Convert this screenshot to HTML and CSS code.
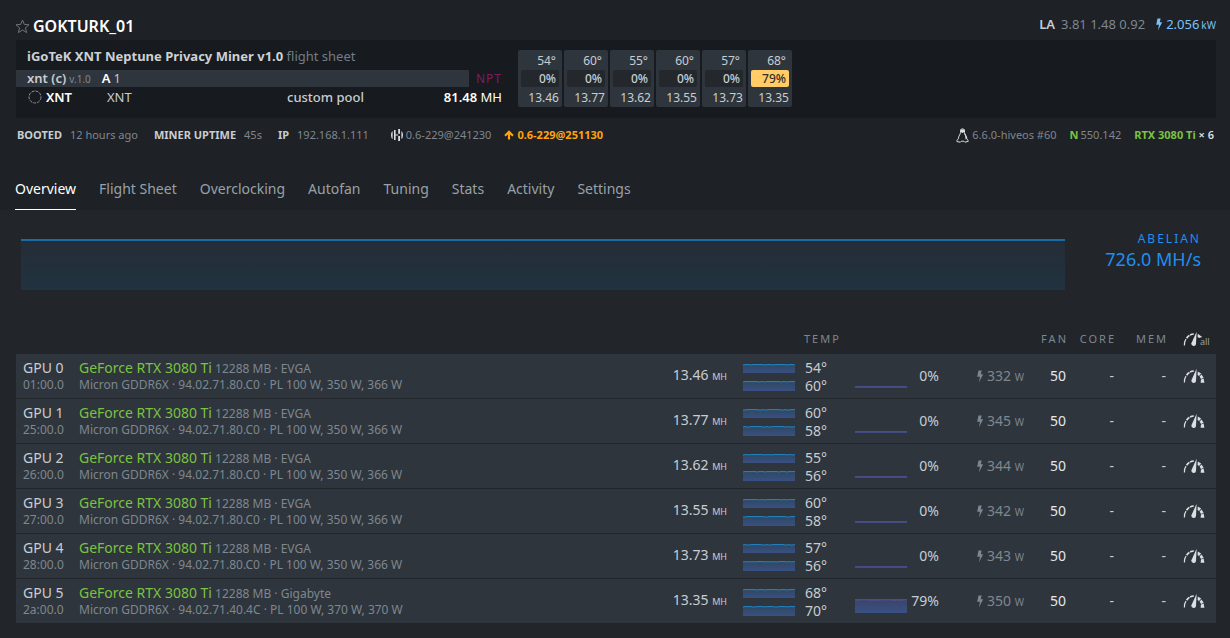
FILE: index.html
```html
<!DOCTYPE html>
<html lang="en">
<head>
    <meta charset="UTF-8">
    <meta name="viewport" content="width=device-width, initial-scale=1.0">
    <title>GOKTURK_01</title>
    <link rel="stylesheet" href="styles.css">
</head>
<body>
    <!-- Shared icons -->
    <svg class="sprite" aria-hidden="true">
        <symbol id="icon-bolt" viewBox="0 0 8 14">
            <path d="M2.4 0.5 H5.8 L4.8 4.6 H7.4 L2.8 13.4 L4 7.2 H1 Z"/>
        </symbol>
        <symbol id="icon-gauge" viewBox="0 0 22 16">
            <path d="M1.4 14.5 A9.2 9.2 0 0 1 3 8.2" fill="none" stroke="currentColor" stroke-width="1.2"/>
            <path d="M3.6 7.2 A9.2 9.2 0 0 1 10.8 3" fill="none" stroke="currentColor" stroke-width="1.7" stroke-dasharray="4 0.7"/>
            <path d="M13.6 0.8 L13 13 A2.2 2.2 0 0 1 8.4 12.2 Z"/>
            <path d="M14.8 3.4 L18.2 5.6 L16 8 L14.6 7 Z"/>
            <path d="M18.6 6.4 L20.6 9.8 L18 11 L16.6 8.4 Z"/>
            <path d="M20.6 10.6 L21.4 14.8 H17.6 L18 11.6 Z"/>
        </symbol>
        <symbol id="icon-gauge-all" viewBox="0 0 22 16">
            <path d="M1.4 14.5 A9.2 9.2 0 0 1 3 8.2" fill="none" stroke="currentColor" stroke-width="1.2"/>
            <path d="M3.6 7.2 A9.2 9.2 0 0 1 10.8 3" fill="none" stroke="currentColor" stroke-width="1.7" stroke-dasharray="4 0.7"/>
            <path d="M13.6 0.8 L13 13 A2.2 2.2 0 0 1 8.4 12.2 Z"/>
            <path d="M14.8 2.8 L19.2 6 L16 7 L14.6 5.8 Z"/>
        </symbol>
        <linearGradient id="fill-temp" x1="0" y1="0" x2="0" y2="1">
            <stop offset="0" stop-color="#2d4860"/>
            <stop offset="1" stop-color="#3a5083"/>
        </linearGradient>
        <linearGradient id="fill-fan" x1="0" y1="0" x2="0" y2="1">
            <stop offset="0" stop-color="#3b4468"/>
            <stop offset="1" stop-color="#395184"/>
        </linearGradient>
    </svg>

    <header class="worker-header">
        <div class="title-row">
            <button class="star" type="button" aria-label="Favorite">
                <svg width="15" height="15" viewBox="0 0 15 15"><path d="M7.5 1 L9.3 5.4 L14 5.8 L10.4 8.8 L11.6 13.6 L7.5 11 L3.4 13.6 L4.6 8.8 L1 5.8 L5.7 5.4 Z"/></svg>
            </button>
            <h1>GOKTURK_01</h1>
            <div class="load">
                <b>LA</b>
                <span class="averages">3.81 1.48 0.92</span>
                <span class="power"><svg class="bolt"><use href="#icon-bolt"/></svg>2.056<small>kW</small></span>
            </div>
        </div>

        <section class="flight-panel">
            <div class="flight-info">
                <div class="flight-name"><b>iGoTeK XNT Neptune Privacy Miner v1.0</b> flight sheet</div>
                <div class="miner-row">
                    <div class="miner-bar"><b>xnt (c)</b> <small>v.1.0</small><span class="accepted"><b>A</b> 1</span></div>
                    <span class="algo">NPT</span>
                </div>
                <div class="coin-row">
                    <svg class="coin" width="14" height="14" viewBox="0 0 14 14"><circle cx="7" cy="7" r="6"/></svg>
                    <b class="coin-name">XNT</b>
                    <span class="wallet">XNT</span>
                    <span class="pool">custom pool</span>
                    <span class="rate"><b>81.48</b> MH</span>
                </div>
            </div>
            <div class="gpu-boxes" id="gpu-boxes"></div>
        </section>

        <div class="status-row">
            <span><b>BOOTED</b>12 hours ago</span>
            <span><b>MINER UPTIME</b>45s</span>
            <span><b>IP</b>192.168.1.111</span>
            <span class="version">
                <svg width="12" height="12" viewBox="0 0 12 12"><path d="M1.6 2 V10 Q0 9 0 6 Q0 3 1.6 2 Z M3 1 H4.6 V11 H3 Z M4.6 5.4 H7.2 V6.6 H4.6 Z M7.2 0 H9 V4.8 H7.2 Z M7.2 7 H9 V12 H7.2 Z M10.4 2 Q12 3 12 6 Q12 9 10.4 10 Z"/></svg>0.6-229@241230
            </span>
            <a class="upgrade" href="#">
                <svg width="10" height="10" viewBox="0 0 10 10"><path d="M5 0.3 L9.7 5 L8.3 6.4 L6.1 4.4 V9.6 H3.9 V4.4 L1.7 6.4 L0.3 5 Z"/></svg>0.6-229@251130
            </a>
            <span class="kernel">
                <svg width="13" height="15" viewBox="0 0 13 15">
                    <path d="M6.5 0.8 C4.6 0.8 4.4 2.4 4.6 4.4 C4.6 6 2.4 8 2.4 10.6 L0.8 12.6 L1 13.6 L4.4 14.2 L5.4 13.2 H7.8 L8.8 14.2 L12.2 13.4 L12 12.4 L10.8 10.8 C10.8 8 8.6 6.2 8.5 4.4 C8.6 2.2 8.4 0.8 6.5 0.8 Z" fill="none" stroke="currentColor"/>
                    <path d="M4.6 1.4 H8.4 V4 L6.5 5 L4.6 4 Z M8.5 5 L11.2 10 L9.6 11.4 Q9.8 8 8 5.4 Z"/>
                </svg>6.6.0-hiveos #60
            </span>
            <span class="driver"><b>N</b>550.142</span>
            <span class="models"><b>RTX 3080 Ti</b> × 6</span>
        </div>

        <nav class="tabs">
            <a class="active" href="#">Overview</a>
            <a href="#">Flight Sheet</a>
            <a href="#">Overclocking</a>
            <a href="#">Autofan</a>
            <a href="#">Tuning</a>
            <a href="#">Stats</a>
            <a href="#">Activity</a>
            <a href="#">Settings</a>
        </nav>
    </header>

    <main>
        <section class="hashrate">
            <div class="hashrate-chart"></div>
            <div class="hashrate-total">
                <span class="algo-name">ABELIAN</span>
                <span class="total">726.0 MH/s</span>
            </div>
        </section>

        <table class="gpus">
            <colgroup>
                <col class="col-id"><col><col class="col-rate"><col class="col-chart"><col class="col-temp"><col class="col-chart">
                <col class="col-percent"><col class="col-watt"><col class="col-fan"><col class="col-core"><col class="col-mem"><col class="col-tune">
            </colgroup>
            <thead>
                <tr>
                    <th colspan="4"></th>
                    <th class="left">TEMP</th>
                    <th colspan="3"></th>
                    <th>FAN</th>
                    <th>CORE</th>
                    <th>MEM</th>
                    <th class="tune"><button type="button" aria-label="Tune all"><svg class="gauge"><use href="#icon-gauge-all"/></svg><small>all</small></button></th>
                </tr>
            </thead>
            <tbody id="gpu-rows"></tbody>
        </table>
    </main>

    <script>
        const gpus = [
            { bus: '01:00.0', vendor: 'EVGA', bios: '94.02.71.80.C0', limits: '350 W, 366 W', rate: '13.46', temp: 54, mem: 60, fan: 0, watt: 332 },
            { bus: '25:00.0', vendor: 'EVGA', bios: '94.02.71.80.C0', limits: '350 W, 366 W', rate: '13.77', temp: 60, mem: 58, fan: 0, watt: 345 },
            { bus: '26:00.0', vendor: 'EVGA', bios: '94.02.71.80.C0', limits: '350 W, 366 W', rate: '13.62', temp: 55, mem: 56, fan: 0, watt: 344 },
            { bus: '27:00.0', vendor: 'EVGA', bios: '94.02.71.80.C0', limits: '350 W, 366 W', rate: '13.55', temp: 60, mem: 58, fan: 0, watt: 342 },
            { bus: '28:00.0', vendor: 'EVGA', bios: '94.02.71.80.C0', limits: '350 W, 366 W', rate: '13.73', temp: 57, mem: 56, fan: 0, watt: 343 },
            { bus: '2a:00.0', vendor: 'Gigabyte', bios: '94.02.71.40.4C', limits: '370 W, 370 W', rate: '13.35', temp: 68, mem: 70, fan: 79, watt: 350 }
        ];

        // Small area chart: a nearly flat line with a few shallow dips
        function sparkline(type, height, seed) {
            let line = '';
            for (let x = 0; x <= 52; x += 2) {
                const y = height > 2 && (x * seed + x * x) % 11 < 2 ? 1 : 0.6;
                line += `${x},${y} `;
            }
            return `<svg class="spark ${type}" width="52" height="${height}" viewBox="0 0 52 ${height}">
                <polygon points="0,${height} ${line} 52,${height}"/>
                <polyline points="${line}"/>
            </svg>`;
        }

        document.getElementById('gpu-boxes').innerHTML = gpus.map(gpu => `
            <div class="gpu-box">
                <span class="box-temp">${gpu.temp}°</span>
                <span class="box-fan${gpu.fan > 70 ? ' warn' : ''}">${gpu.fan}%</span>
                <span class="box-rate">${gpu.rate}</span>
            </div>`).join('');

        document.getElementById('gpu-rows').innerHTML = gpus.map((gpu, i) => `
            <tr>
                <td class="id"><span>GPU ${i}</span><small>${gpu.bus}</small></td>
                <td class="card">
                    <div><b>GeForce RTX 3080 Ti</b> 12288 MB · ${gpu.vendor}</div>
                    <div>Micron GDDR6X · ${gpu.bios} · PL 100 W, ${gpu.limits}</div>
                </td>
                <td class="rate-cell">${gpu.rate} <small>MH</small></td>
                <td><div class="charts">${sparkline('temp', 9, i + 3)}${sparkline('temp', 10, i + 6)}</div></td>
                <td class="temps"><div>${gpu.temp}°</div><div>${gpu.mem}°</div></td>
                <td><div class="charts">${sparkline('fan', gpu.fan ? 14 : 2, 4)}</div></td>
                <td>${gpu.fan}%</td>
                <td class="watt"><svg class="bolt"><use href="#icon-bolt"/></svg>${gpu.watt} <small>W</small></td>
                <td class="fan">50</td>
                <td>-</td>
                <td>-</td>
                <td class="tune"><button type="button" aria-label="Tune GPU ${i}"><svg class="gauge"><use href="#icon-gauge"/></svg></button></td>
            </tr>`).join('');
    </script>
</body>
</html>
```
FILE: styles.css
```css
* { box-sizing: border-box; }
body { margin: 0; background: #22252a; color: #c8cdd2; font-family: "Noto Sans", "Open Sans", sans-serif; font-size: 12px; line-height: 18px; }
b { font-weight: 600; }
a { color: inherit; text-decoration: none; }
button { padding: 0; border: none; background: none; color: inherit; font: inherit; cursor: pointer; }
svg { fill: currentColor; }
.sprite { position: absolute; width: 0; height: 0; }

/* Header */
.worker-header { background: #1e2125; padding: 12px 14px 0 16px; }
.title-row { display: flex; align-items: center; height: 28px; }
.title-row h1 { margin: 0 auto 0 3px; color: #fff; font-size: 16px; font-weight: 600; line-height: 28px; }
.star { display: flex; margin-left: -1px; color: #70757a; }
.star path { fill: none; stroke: currentColor; }
.load { display: flex; gap: 6px; font-size: 13px; padding-bottom: 3px; }
.load .averages { color: #7e8790; }
.load .power { margin-left: 4px; color: #7dc0f9; }
.load small { margin-left: 2px; font-size: 10px; }
.bolt { width: 8px; height: 13px; margin-right: 3px; vertical-align: -2px; }

.flight-panel { display: flex; align-items: flex-start; gap: 16px; min-height: 78px; padding: 7px 0; background: #171a1e; border-radius: 3px; }
.flight-info { width: 486px; font-size: 13px; }
.flight-name { padding-left: 11px; height: 23px; color: #737d87; }
.flight-name b { color: #ccd1d6; font-weight: 700; }
.miner-row { display: flex; align-items: center; justify-content: space-between; height: 17px; }
.miner-bar { width: 453px; height: 17px; padding-left: 11px; background: #2f353c; font-size: 12px; line-height: 17px; }
.miner-bar b { font-size: 13px; }
.miner-bar small { color: #7e8790; font-size: 10px; }
.accepted { margin-left: 11px; }
.accepted b { color: #fff; }
.algo { color: #7d1f5e; font-size: 12px; letter-spacing: 1px; }
.coin-row { display: flex; align-items: center; height: 20px; padding-left: 12px; }
.coin { margin-right: 4px; fill: none; stroke: #8b9299; stroke-dasharray: 3 1; }
.coin-name { width: 61px; color: #fff; }
.wallet { width: 180px; }
.pool { font-weight: 500; }
.rate { margin-left: auto; color: #fff; }
.gpu-boxes { display: flex; gap: 2px; padding-top: 3px; }
.gpu-box { display: flex; flex-direction: column; width: 44px; height: 57px; padding: 2px 3px; background: #2f353c; border-radius: 2px; text-align: right; }
.gpu-box .box-temp { padding-right: 3px; }
.gpu-box .box-fan { height: 17px; padding-right: 3px; border-radius: 2px; background: #24282d; font-weight: 500; line-height: 18px; }
.gpu-box .box-fan.warn { background: #fc6; color: #33302a; }
.gpu-box .box-rate { line-height: 21px; }

.status-row { display: flex; align-items: center; gap: 16px; height: 34px; padding: 0 2px 0 1px; color: #7e8790; font-size: 11px; }
.status-row b { margin-right: 8px; color: #c8cdd2; font-weight: 700; }
.status-row svg { vertical-align: -2px; margin-right: 3px; color: #dcdfe2; }
.version { margin-left: 6px; }
.status-row .upgrade { margin-left: -3px; color: #ffa30f; font-weight: 700; }
.status-row .upgrade svg { color: inherit; vertical-align: -1px; }
.kernel { margin-left: auto; }
.status-row .kernel svg { vertical-align: -4px; }
.status-row .driver { margin-left: -3px; }
.status-row .driver b { margin-right: 2px; color: #7bc242; }
.status-row .models { margin-left: -3px; color: #dcdfe2; font-weight: 600; }
.status-row .models b { margin: 0; color: #7bc242; }

.tabs { display: flex; gap: 23px; margin-top: 16px; margin-left: -1px; color: #98a1a9; font-size: 14px; }
.tabs a { padding: 12px 0 11px; border-bottom: 1px solid transparent; }
.tabs .active { color: #fff; border-color: #fff; }

/* Total hashrate */
.hashrate { display: flex; align-items: flex-start; justify-content: space-between; padding: 29px 29px 33px 21px; }
.hashrate-chart { flex: 1; height: 51px; margin-right: 40px; border-top: 2px solid #1a6aa5; background: linear-gradient(#242d37, #213240); }
.hashrate-total { display: flex; flex-direction: column; text-align: right; color: #1f8ff0; }
.algo-name { margin-top: -9px; letter-spacing: 2px; }
.total { font-size: 18px; line-height: 23px; }

/* GPU list */
.gpus { width: calc(100% - 30px); margin-left: 16px; border-collapse: separate; border-spacing: 0; table-layout: fixed; font-size: 14px; }
.col-id { width: 55px; }
.col-rate { width: 80px; }
.col-chart { width: 60px; }
.col-temp { width: 52px; }
.col-percent { width: 40px; }
.col-watt { width: 85px; }
.col-fan { width: 42px; }
.col-core { width: 48px; }
.col-mem { width: 52px; }
.col-tune { width: 42px; }
.gpus th { height: 31px; padding: 0 6px 0 0; color: #7e8790; font-size: 11px; font-weight: 400; letter-spacing: 2px; text-align: right; }
.gpus th.left { padding-left: 9px; text-align: left; }
.gpus td { height: 45px; padding: 0 8px 0 0; background: #2f353c; border-bottom: 1px solid #22252a; text-align: right; white-space: nowrap; }
.gpus td small { font-size: 10px; }
.gpus .id { padding-left: 7px; text-align: left; }
.gpus .id span, .gpus .id small { display: block; line-height: 17px; }
.gpus td.id small { color: #7e8790; font-size: 12px; }
.gpus .card { padding-left: 8px; color: #7e8790; font-size: 12px; line-height: 16px; text-align: left; }
.gpus .card b { color: #7bc242; font-size: 14px; font-weight: 400; }
.gpus .rate-cell small { font-size: 9px; }
.gpus .temps { padding: 2px 0 0 10px; text-align: left; }
.gpus .watt { color: #7e8790; }
.gpus .fan { color: #e4e7ea; }
.charts { display: flex; flex-direction: column; gap: 8px; padding: 2px 0 0 8px; }
.spark.temp polygon { fill: url(#fill-temp); }
.spark.temp polyline { fill: none; stroke: #2086c8; }
.spark.fan { margin-top: 20px; }
.spark.fan[height="14"] { margin-top: 8px; }
.spark.fan polygon { fill: url(#fill-fan); }
.spark.fan polyline { fill: none; stroke: #4c4d88; stroke-width: 2; }
.gpus .tune { padding: 0 0 0 9px; text-align: left; letter-spacing: 0; }
.tune button { display: flex; align-items: flex-end; color: #dcdfe2; }
.gauge { flex: none; width: 22px; height: 16px; }
.tune small { margin-left: -5px; color: #9aa1a8; font-size: 9px; line-height: 10px; }
```
